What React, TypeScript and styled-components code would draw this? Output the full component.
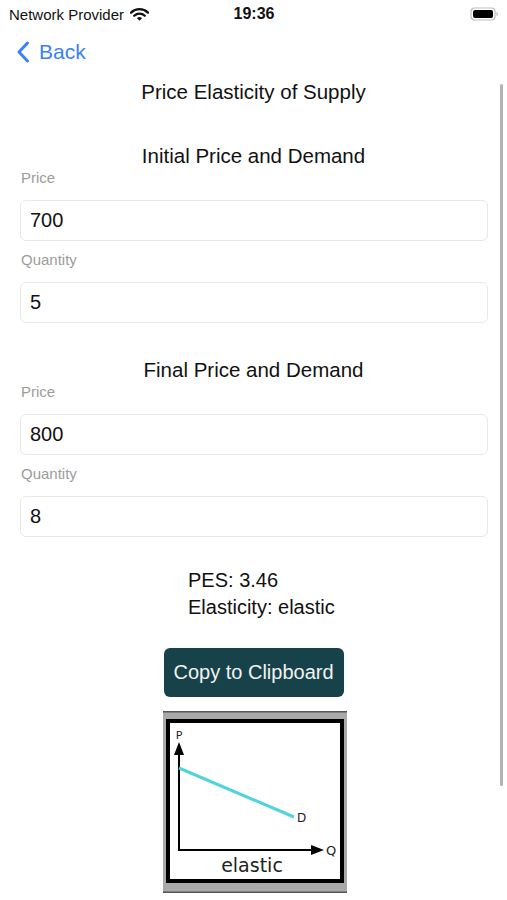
import React from 'react';
import styled, { createGlobalStyle } from 'styled-components';

const Global = createGlobalStyle`
  html, body {
    margin: 0;
    padding: 0;
    background: #ffffff;
  }
  body {
    font-family: "Liberation Sans", Arial, sans-serif;
    color: #111;
  }
`;

const Screen = styled.div`
  position: relative;
  width: 507px;
  height: 900px;
  overflow: hidden;
  background: #fff;
`;

const StatusBar = styled.div`
  height: 28px;
  display: grid;
  grid-template-columns: 1fr auto 1fr;
  align-items: center;
  padding: 0 8px 0 9px;
  font-size: 15px;
  color: #111;
  .left {
    display: flex;
    align-items: center;
    gap: 6px;
  }
  .time {
    font-weight: bold;
    font-size: 16px;
  }
  .right {
    display: flex;
    justify-content: flex-end;
  }
`;

const NavBar = styled.div`
  height: 48px;
  display: flex;
  align-items: center;
  padding-left: 16px;
  gap: 9px;
  color: #3a82f7;
  font-size: 21px;
`;

const Title = styled.div<{ $top?: number }>`
  text-align: center;
  font-size: 20.5px;
  line-height: ${p => (p.$top ? 24 : 32)}px;
  margin-top: ${p => p.$top ?? 0}px;
`;

const Label = styled.div<{ $top: number }>`
  margin-top: ${p => p.$top}px;
  padding-left: 21px;
  font-size: 15px;
  line-height: 20px;
  color: #9c9c9c;
`;

const Field = styled.div`
  margin: 12px 19px 0 20px;
  height: 39px;
  border: 1px solid #e8e8e8;
  border-radius: 6px;
  display: flex;
  align-items: center;
  padding-left: 9px;
  font-size: 20px;
  color: #111;
`;

const Result = styled.div`
  margin-top: 30px;
  padding-left: 188px;
  font-size: 20px;
  line-height: 27px;
`;

const CopyButton = styled.button`
  display: block;
  margin: 27px auto 0;
  width: 180px;
  height: 49px;
  border: none;
  border-radius: 6px;
  background: #17424a;
  color: #f2f2f2;
  font-family: "Liberation Sans", Arial, sans-serif;
  font-size: 20px;
  padding: 0;
`;

const Chart = styled.div`
  margin: 14px 0 0 163px;
  width: 184px;
  height: 182px;
  svg {
    display: block;
  }
`;

const ScrollBar = styled.div`
  position: absolute;
  right: 4px;
  top: 84px;
  width: 3px;
  height: 702px;
  border-radius: 2px;
  background: #b3b3b3;
`;

const Wifi = () => (
  <svg width="19" height="15" viewBox="0 0 18 14">
    <path d="M1 5.2 A11.5 11.5 0 0 1 17 5.2" stroke="#111" strokeWidth="2.2" fill="none" strokeLinecap="round" />
    <path d="M4 8.2 A7.2 7.2 0 0 1 14 8.2" stroke="#111" strokeWidth="2.2" fill="none" strokeLinecap="round" />
    <path d="M9 13 L6.6 10.6 A3.4 3.4 0 0 1 11.4 10.6 Z" fill="#111" />
  </svg>
);

const Battery = () => (
  <svg width="29" height="14" viewBox="0 0 29 14">
    <rect x="1" y="1" width="24" height="12" rx="3.5" fill="none" stroke="#bdbdbd" strokeWidth="1.2" />
    <rect x="3" y="3" width="20" height="8" rx="2" fill="#000" />
    <path d="M26.5 5 Q28 5.3 28 7 Q28 8.7 26.5 9 Z" fill="#bdbdbd" />
  </svg>
);

const Chevron = () => (
  <svg width="14" height="22" viewBox="0 0 14 22">
    <path d="M11.5 2 L3 11 L11.5 20" stroke="#3a82f7" strokeWidth="3" fill="none" strokeLinecap="round" strokeLinejoin="round" />
  </svg>
);

const ElasticGraph = () => (
  <svg width="184" height="182" viewBox="0 0 184 182">
    <rect x="0" y="0" width="184" height="182" fill="#a9a9a9" />
    <rect x="0" y="0" width="184" height="1.5" fill="#555" />
    <rect x="0" y="180.5" width="184" height="1.5" fill="#555" />
    <rect x="3" y="8" width="178" height="164" fill="#000" />
    <rect x="7" y="12" width="170" height="156" fill="#fff" />
    <line x1="16" y1="40" x2="16" y2="139" stroke="#000" strokeWidth="2" />
    <line x1="15" y1="139" x2="152" y2="139" stroke="#000" strokeWidth="2" />
    <path d="M16 31 L11 44 L21 44 Z" fill="#000" />
    <path d="M161 139 L148 134 L148 144 Z" fill="#000" />
    <line x1="16" y1="57" x2="131" y2="106" stroke="#4fd3dc" strokeWidth="3" />
    <g fontFamily="'DejaVu Sans', sans-serif" fill="#222">
      <text x="16" y="28" fontSize="11" textAnchor="middle">P</text>
      <text x="163" y="144" fontSize="13">Q</text>
      <text x="134" y="111" fontSize="12">D</text>
      <text x="89" y="161" fontSize="19" textAnchor="middle">elastic</text>
    </g>
  </svg>
);

export default function App() {
  return (
    <Screen>
      <Global />
      <StatusBar>
        <div className="left">
          <span>Network Provider</span>
          <Wifi />
        </div>
        <span className="time">19:36</span>
        <div className="right">
          <Battery />
        </div>
      </StatusBar>
      <NavBar>
        <Chevron />
        <span>Back</span>
      </NavBar>
      <Title>Price Elasticity of Supply</Title>

      <Title $top={36}>Initial Price and Demand</Title>
      <Label $top={0}>Price</Label>
      <Field>700</Field>
      <Label $top={9}>Quantity</Label>
      <Field>5</Field>

      <Title $top={35}>Final Price and Demand</Title>
      <Label $top={0}>Price</Label>
      <Field>800</Field>
      <Label $top={9}>Quantity</Label>
      <Field>8</Field>

      <Result>
        <div>PES: 3.46</div>
        <div>Elasticity: elastic</div>
      </Result>
      <CopyButton>Copy to Clipboard</CopyButton>
      <Chart>
        <ElasticGraph />
      </Chart>
      <ScrollBar />
    </Screen>
  );
}
